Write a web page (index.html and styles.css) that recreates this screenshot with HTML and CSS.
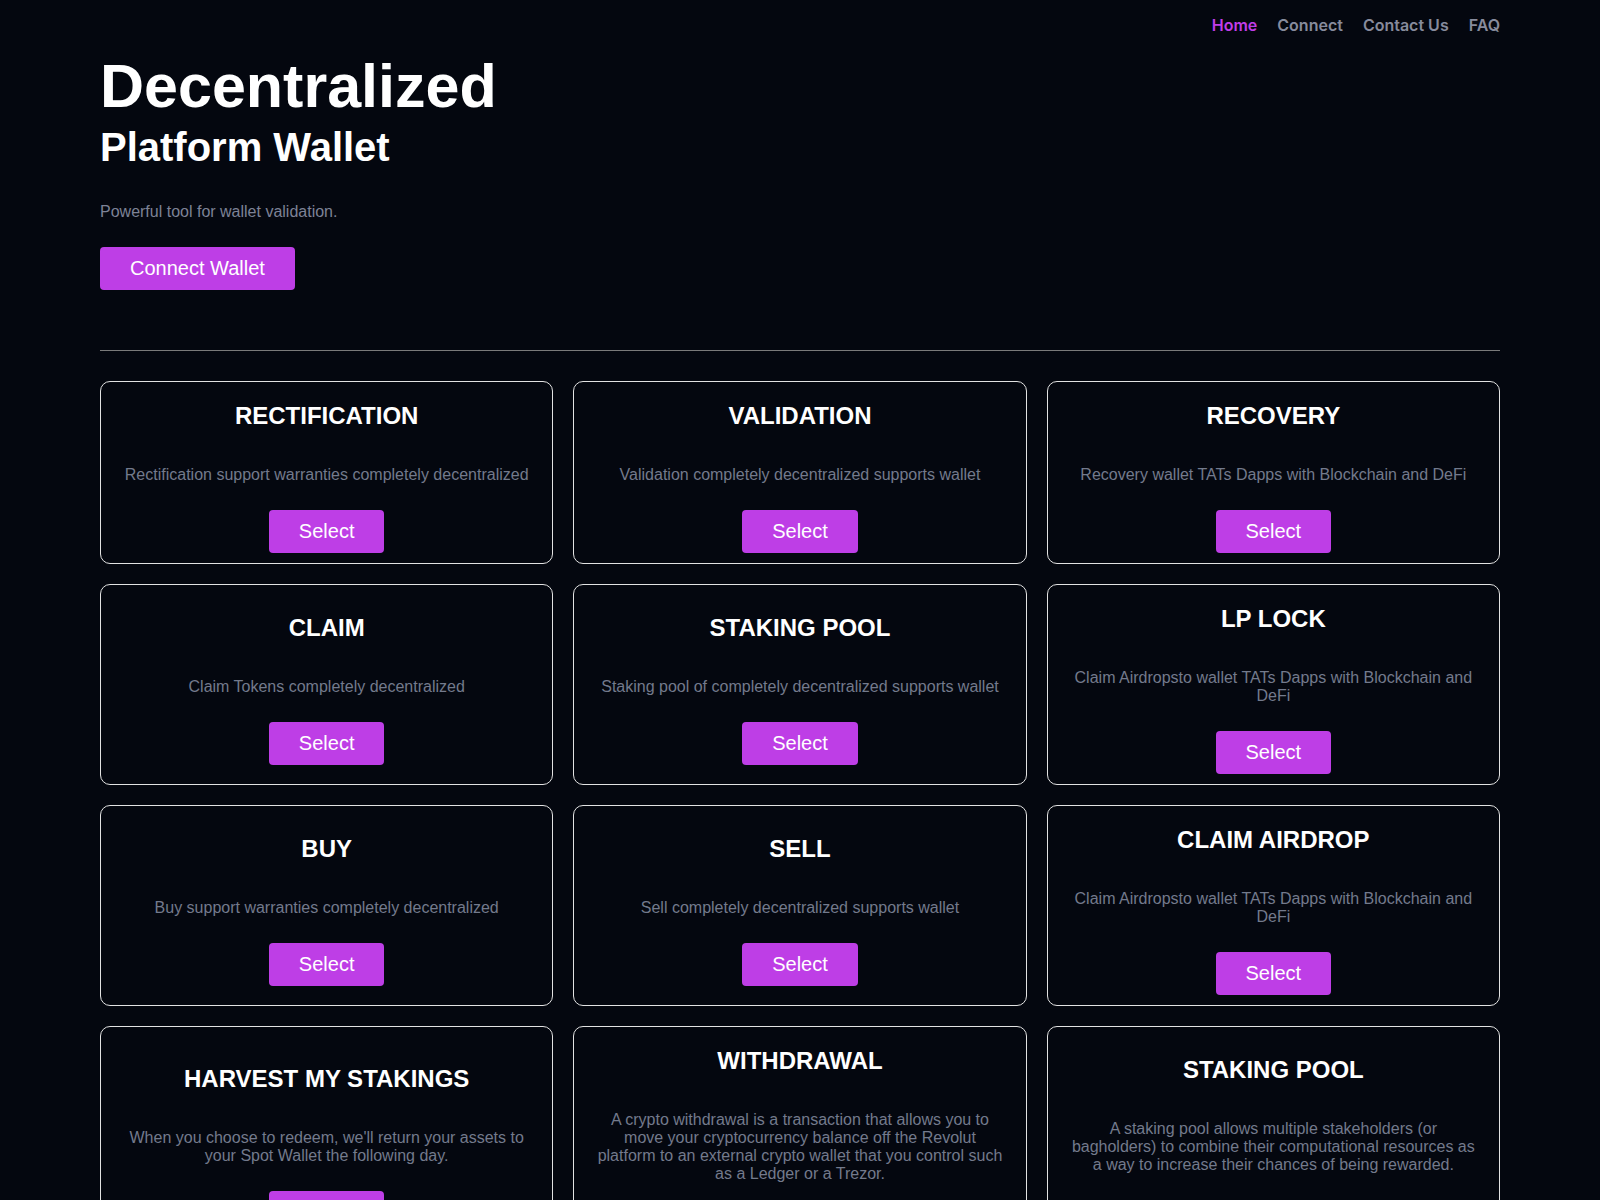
FILE: index.html
```html
<!DOCTYPE html>
<html lang="en">
<head>
  <meta charset="UTF-8">
  <meta name="viewport" content="width=device-width, initial-scale=1.0">
  <title>Decentralized Platform Wallet</title>
  <link rel="stylesheet" href="styles.css">
</head>
<body>
  <div class="container">
    <!-- top menu -->
    <nav class="nav">
      <a href="#" class="active">Home</a>
      <a href="#">Connect</a>
      <a href="#">Contact Us</a>
      <a href="#">FAQ</a>
    </nav>

    <header class="hero">
      <h1>Decentralized</h1>
      <h2>Platform Wallet</h2>
      <p>Powerful tool for wallet validation.</p>
      <button class="btn">Connect Wallet</button>
    </header>

    <hr class="divider">

    <section class="cards">
      <div class="card">
        <h3>RECTIFICATION</h3>
        <p>Rectification support warranties completely decentralized</p>
        <button class="btn">Select</button>
      </div>
      <div class="card">
        <h3>VALIDATION</h3>
        <p>Validation completely decentralized supports wallet</p>
        <button class="btn">Select</button>
      </div>
      <div class="card">
        <h3>RECOVERY</h3>
        <p>Recovery wallet TATs Dapps with Blockchain and DeFi</p>
        <button class="btn">Select</button>
      </div>
      <div class="card">
        <h3>CLAIM</h3>
        <p>Claim Tokens completely decentralized</p>
        <button class="btn">Select</button>
      </div>
      <div class="card">
        <h3>STAKING POOL</h3>
        <p>Staking pool of completely decentralized supports wallet</p>
        <button class="btn">Select</button>
      </div>
      <div class="card">
        <h3>LP LOCK</h3>
        <p>Claim Airdropsto wallet TATs Dapps with Blockchain and DeFi</p>
        <button class="btn">Select</button>
      </div>
      <div class="card">
        <h3>BUY</h3>
        <p>Buy support warranties completely decentralized</p>
        <button class="btn">Select</button>
      </div>
      <div class="card">
        <h3>SELL</h3>
        <p>Sell completely decentralized supports wallet</p>
        <button class="btn">Select</button>
      </div>
      <div class="card">
        <h3>CLAIM AIRDROP</h3>
        <p>Claim Airdropsto wallet TATs Dapps with Blockchain and DeFi</p>
        <button class="btn">Select</button>
      </div>
      <div class="card">
        <h3>HARVEST MY STAKINGS</h3>
        <p>When you choose to redeem, we'll return your assets to your Spot Wallet the following day.</p>
        <button class="btn">Select</button>
      </div>
      <div class="card">
        <h3>WITHDRAWAL</h3>
        <p>A crypto withdrawal is a transaction that allows you to move your cryptocurrency balance off the Revolut platform to an external crypto wallet that you control such as a Ledger or a Trezor.</p>
        <button class="btn">Select</button>
      </div>
      <div class="card">
        <h3>STAKING POOL</h3>
        <p>A staking pool allows multiple stakeholders (or bagholders) to combine their computational resources as a way to increase their chances of being rewarded.</p>
        <button class="btn">Select</button>
      </div>
    </section>
  </div>
</body>
</html>
```

FILE: styles.css
```css
* {
  box-sizing: border-box;
}
body {
  margin: 0;
  background-color: #04070f;
  color: #fff;
  font-family: "Liberation Sans", Arial, sans-serif;
}

.container {
  width: 1400px;
  margin: 0 auto;
  padding-bottom: 40px;
}

/* top menu */
.nav {
  display: flex;
  justify-content: flex-end;
  gap: 20px;
  padding-top: 14.5px;
}
.nav a {
  font-family: Inter, "Noto Sans", sans-serif;
  font-size: 16px;
  font-weight: 600;
  color: #878b9c;
  text-decoration: none;
}
.nav a.active {
  color: #c03de8;
}

/* hero */
.hero h1 {
  font-size: 61px;
  margin: 16px 0 0;
}
.hero h2 {
  font-size: 40px;
  margin: 4px 0 0;
}
.hero p {
  font-size: 16px;
  color: #7d8296;
  margin: 33px 0 26px;
}

.btn {
  font-family: "Liberation Sans", Arial, sans-serif;
  font-size: 20px;
  line-height: 23px;
  color: #fff;
  background-color: #be3ee6;
  border: none;
  border-radius: 4px;
  padding: 10px 30px;
  cursor: pointer;
}

.divider {
  border: none;
  border-top: 1px solid #7a7a7a;
  margin: 60px 0 30px;
}

/* service cards */
.cards {
  display: grid;
  grid-template-columns: repeat(3, 1fr);
  gap: 20px;
}
.card {
  display: flex;
  flex-direction: column;
  align-items: center;
  justify-content: center;
  text-align: center;
  border: 1px solid #e2e2e2;
  border-radius: 10px;
  padding: 20px 20px 10px;
}
.card h3 {
  font-size: 24px;
  margin: 0 0 20px;
}
.card p {
  font-size: 16px;
  color: #737a8c;
  margin: 16px 0;
}
.card .btn {
  margin-top: 10px;
}
```
